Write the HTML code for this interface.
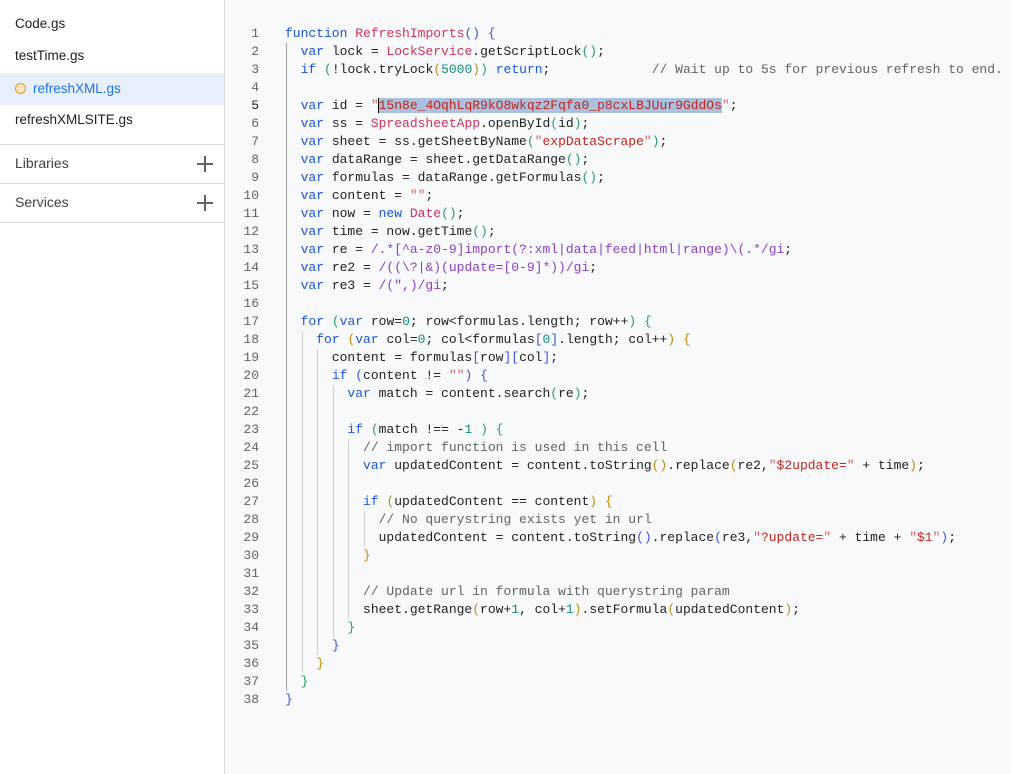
<!DOCTYPE html>
<html><head><meta charset="utf-8"><style>
html,body{margin:0;padding:0;width:1011px;height:774px;overflow:hidden;background:#f8f9fa;font-family:"Liberation Sans",sans-serif}
#side{position:absolute;left:0;top:0;width:224px;height:774px;background:#fff;border-right:1px solid #dadce0}
.it{position:absolute;left:0;width:224px;height:32px;line-height:32px;font-size:13.5px;color:#202124;padding-left:15px;box-sizing:border-box}
.sel{background:#e8f0fe;color:#1a73e8}
.dot{display:inline-block;width:9px;height:9px;border:1.5px solid #f29900;background:#fde4c8;border-radius:50%;vertical-align:-1px;margin-right:7px}
.sep{position:absolute;left:0;width:224px;height:1px;background:#dadce0}
.sec{position:absolute;left:15px;font-size:14px;color:#3c4043;height:20px;line-height:20px}
.plus{position:absolute;left:197px;width:16px;height:16px}
.plus:before{content:"";position:absolute;left:0;top:7px;width:16px;height:2px;background:#5f6368}
.plus:after{content:"";position:absolute;left:7px;top:0;width:2px;height:16px;background:#5f6368}
#code{position:absolute;left:225px;top:25px;font-family:"Liberation Mono",monospace;font-size:13px;color:#202124}
.l{position:absolute;left:60px;height:18px;line-height:18px;white-space:pre}
.n{position:absolute;left:0;width:34px;text-align:right;height:18px;line-height:18px;color:#5f6368}
.k{color:#1a55d4}.c{color:#d0305a}.s{color:#c5221f}.q{color:#e06060}.nm{color:#128c7e}.r{color:#8a3fc2}.m{color:#5f6368}
.b0{color:#3f51e0}.b1{color:#2a9d64}.b2{color:#c28a10}
.g{position:absolute;width:1px;background:#d0d0d0}
.hl{background:#a9c1dc}
</style></head><body>
<div id="side">
<div class="it" style="top:8px">Code.gs</div>
<div class="it" style="top:40px">testTime.gs</div>
<div class="it sel" style="top:73px"><span class="dot"></span>refreshXML.gs</div>
<div class="it" style="top:104px">refreshXMLSITE.gs</div>
<div class="sep" style="top:144px"></div>
<div class="sec" style="top:153px">Libraries</div><div class="plus" style="top:156px"></div>
<div class="sep" style="top:183px"></div>
<div class="sec" style="top:192px">Services</div><div class="plus" style="top:195px"></div>
<div class="sep" style="top:222px"></div>
</div>
<div id="code">
<div class="g" style="left:61px;top:18px;height:648px;background:#9aa0a6"></div>
<div class="g" style="left:77px;top:306px;height:342px"></div>
<div class="g" style="left:92px;top:324px;height:306px"></div>
<div class="g" style="left:108px;top:360px;height:252px"></div>
<div class="g" style="left:123px;top:414px;height:180px"></div>
<div class="g" style="left:139px;top:486px;height:36px"></div>

<div class="n" style="top:0">1</div><div class="l" style="top:0"><span class="k">function</span> <span class="c">RefreshImports</span><span class="b0">()</span> <span class="b0">{</span></div>
<div class="n" style="top:18px">2</div><div class="l" style="top:18px">  <span class="k">var</span> lock = <span class="c">LockService</span>.getScriptLock<span class="b1">()</span>;</div>
<div class="n" style="top:36px">3</div><div class="l" style="top:36px">  <span class="k">if</span> <span class="b1">(</span>!lock.tryLock<span class="b2">(</span><span class="nm">5000</span><span class="b2">)</span><span class="b1">)</span> <span class="k">return</span>;             <span class="m">// Wait up to 5s for previous refresh to end.</span></div>
<div class="n" style="top:54px">4</div>
<div class="n" style="top:72px;color:#202124">5</div><div class="l" style="top:72px">  <span class="k">var</span> id = <span class="q">"</span><span class="s hl" style="box-shadow:-1px 0 0 #000">15n8e_4OqhLqR9kO8wkqz2Fqfa0_p8cxLBJUur9GddOs</span><span class="q">"</span>;</div>
<div class="n" style="top:90px">6</div><div class="l" style="top:90px">  <span class="k">var</span> ss = <span class="c">SpreadsheetApp</span>.openById<span class="b1">(</span>id<span class="b1">)</span>;</div>
<div class="n" style="top:108px">7</div><div class="l" style="top:108px">  <span class="k">var</span> sheet = ss.getSheetByName<span class="b1">(</span><span class="q">"</span><span class="s">expDataScrape</span><span class="q">"</span><span class="b1">)</span>;</div>
<div class="n" style="top:126px">8</div><div class="l" style="top:126px">  <span class="k">var</span> dataRange = sheet.getDataRange<span class="b1">()</span>;</div>
<div class="n" style="top:144px">9</div><div class="l" style="top:144px">  <span class="k">var</span> formulas = dataRange.getFormulas<span class="b1">()</span>;</div>
<div class="n" style="top:162px">10</div><div class="l" style="top:162px">  <span class="k">var</span> content = <span class="q">""</span>;</div>
<div class="n" style="top:180px">11</div><div class="l" style="top:180px">  <span class="k">var</span> now = <span class="k">new</span> <span class="c">Date</span><span class="b1">()</span>;</div>
<div class="n" style="top:198px">12</div><div class="l" style="top:198px">  <span class="k">var</span> time = now.getTime<span class="b1">()</span>;</div>
<div class="n" style="top:216px">13</div><div class="l" style="top:216px">  <span class="k">var</span> re = <span class="r">/.*[^a-z0-9]import(?:xml|data|feed|html|range)\(.*/gi</span>;</div>
<div class="n" style="top:234px">14</div><div class="l" style="top:234px">  <span class="k">var</span> re2 = <span class="r">/((\?|&amp;)(update=[0-9]*))/gi</span>;</div>
<div class="n" style="top:252px">15</div><div class="l" style="top:252px">  <span class="k">var</span> re3 = <span class="r">/(",)/gi</span>;</div>
<div class="n" style="top:270px">16</div>
<div class="n" style="top:288px">17</div><div class="l" style="top:288px">  <span class="k">for</span> <span class="b1">(</span><span class="k">var</span> row=<span class="nm">0</span>; row&lt;formulas.length; row++<span class="b1">)</span> <span class="b1">{</span></div>
<div class="n" style="top:306px">18</div><div class="l" style="top:306px">    <span class="k">for</span> <span class="b2">(</span><span class="k">var</span> col=<span class="nm">0</span>; col&lt;formulas<span class="b0">[</span><span class="nm">0</span><span class="b0">]</span>.length; col++<span class="b2">)</span> <span class="b2">{</span></div>
<div class="n" style="top:324px">19</div><div class="l" style="top:324px">      content = formulas<span class="b0">[</span>row<span class="b0">]</span><span class="b0">[</span>col<span class="b0">]</span>;</div>
<div class="n" style="top:342px">20</div><div class="l" style="top:342px">      <span class="k">if</span> <span class="b0">(</span>content != <span class="q">""</span><span class="b0">)</span> <span class="b0">{</span></div>
<div class="n" style="top:360px">21</div><div class="l" style="top:360px">        <span class="k">var</span> match = content.search<span class="b1">(</span>re<span class="b1">)</span>;</div>
<div class="n" style="top:378px">22</div>
<div class="n" style="top:396px">23</div><div class="l" style="top:396px">        <span class="k">if</span> <span class="b1">(</span>match !== -<span class="nm">1</span> <span class="b1">)</span> <span class="b1">{</span></div>
<div class="n" style="top:414px">24</div><div class="l" style="top:414px">          <span class="m">// import function is used in this cell</span></div>
<div class="n" style="top:432px">25</div><div class="l" style="top:432px">          <span class="k">var</span> updatedContent = content.toString<span class="b2">()</span>.replace<span class="b2">(</span>re2,<span class="q">"</span><span class="s">$2update=</span><span class="q">"</span> + time<span class="b2">)</span>;</div>
<div class="n" style="top:450px">26</div>
<div class="n" style="top:468px">27</div><div class="l" style="top:468px">          <span class="k">if</span> <span class="b2">(</span>updatedContent == content<span class="b2">)</span> <span class="b2">{</span></div>
<div class="n" style="top:486px">28</div><div class="l" style="top:486px">            <span class="m">// No querystring exists yet in url</span></div>
<div class="n" style="top:504px">29</div><div class="l" style="top:504px">            updatedContent = content.toString<span class="b0">()</span>.replace<span class="b0">(</span>re3,<span class="q">"</span><span class="s">?update=</span><span class="q">"</span> + time + <span class="q">"</span><span class="s">$1</span><span class="q">"</span><span class="b0">)</span>;</div>
<div class="n" style="top:522px">30</div><div class="l" style="top:522px">          <span class="b2">}</span></div>
<div class="n" style="top:540px">31</div>
<div class="n" style="top:558px">32</div><div class="l" style="top:558px">          <span class="m">// Update url in formula with querystring param</span></div>
<div class="n" style="top:576px">33</div><div class="l" style="top:576px">          sheet.getRange<span class="b2">(</span>row+<span class="nm">1</span>, col+<span class="nm">1</span><span class="b2">)</span>.setFormula<span class="b2">(</span>updatedContent<span class="b2">)</span>;</div>
<div class="n" style="top:594px">34</div><div class="l" style="top:594px">        <span class="b1">}</span></div>
<div class="n" style="top:612px">35</div><div class="l" style="top:612px">      <span class="b0">}</span></div>
<div class="n" style="top:630px">36</div><div class="l" style="top:630px">    <span class="b2">}</span></div>
<div class="n" style="top:648px">37</div><div class="l" style="top:648px">  <span class="b1">}</span></div>
<div class="n" style="top:666px">38</div><div class="l" style="top:666px"><span class="b0">}</span></div>
</div>
</body></html>
